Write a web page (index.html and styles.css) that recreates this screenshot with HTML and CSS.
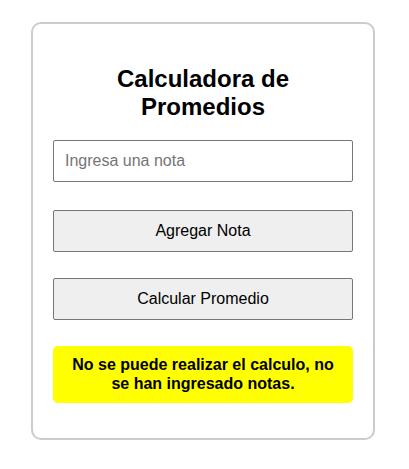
FILE: index.html
```html
<!DOCTYPE html>
<html lang="es">
<head>
<meta charset="utf-8">
<title>Calculadora de Promedios</title>
<link rel="stylesheet" href="styles.css">
</head>
<body>
  <div class="card">
    <h2 class="title">Calculadora de Promedios</h2>
    <input class="field" type="text" placeholder="Ingresa una nota">
    <button class="btn btn-add" type="button">Agregar Nota</button>
    <button class="btn btn-calc" type="button">Calcular Promedio</button>
    <div class="message">No se puede realizar el calculo, no se han ingresado notas.</div>
  </div>
</body>
</html>
```
FILE: styles.css
```css
html, body {
  margin: 0;
  padding: 0;
  background: #ffffff;
}
body {
  font-family: "Liberation Sans", Arial, sans-serif;
  padding: 22px 0 0 31px;
}
.card {
  width: 300px;
  padding: 20px 20px 35px;
  border: 2px solid #cccccc;
  border-radius: 10px;
  display: flex;
  flex-direction: column;
}
.title {
  font-size: 24px;
  font-weight: bold;
  text-align: center;
  margin: 21px 0 20px;
  line-height: 27.6px;
  color: #000;
}
.field {
  box-sizing: border-box;
  height: 42px;
  width: 300px;
  margin: 0 0 28px;
  padding: 0 11px;
  border: 1px solid #767676;
  border-radius: 2px;
  font-family: "Liberation Sans", Arial, sans-serif;
  font-size: 16px;
  color: #000;
  background: #fff;
}
.field::placeholder {
  color: #757575;
}
.btn {
  box-sizing: border-box;
  height: 42px;
  width: 300px;
  margin: 0 0 26px;
  padding: 0;
  border: 1px solid #767676;
  border-radius: 2px;
  background: #efefef;
  font-family: "Liberation Sans", Arial, sans-serif;
  font-size: 16px;
  color: #000;
}
.message {
  background: #ffff00;
  border-radius: 5px;
  padding: 10px;
  font-weight: bold;
  font-size: 16px;
  line-height: 18.4px;
  text-align: center;
  color: #000;
}
```
